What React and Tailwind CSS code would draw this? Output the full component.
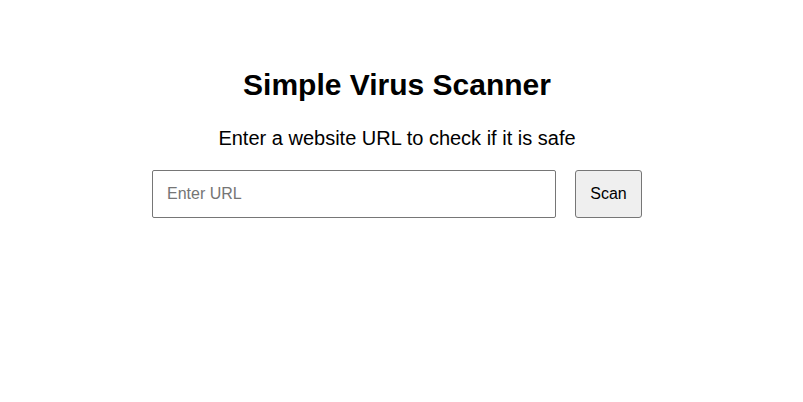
import { useState } from "react";

function App() {
  const [url, setUrl] = useState("");

  return (
    <div className="min-h-screen bg-white pt-[70px] pr-[9px] text-black font-['Liberation_Sans',Arial,sans-serif]">
      <h1 className="text-center text-[30px] leading-[30px] font-bold">
        Simple Virus Scanner
      </h1>
      <p className="mt-[28px] text-center text-[20px] leading-[20px]">
        Enter a website URL to check if it is safe
      </p>
      <div className="mt-[22px] flex justify-center gap-[19px]">
        <input
          type="text"
          value={url}
          onChange={(e) => setUrl(e.target.value)}
          placeholder="Enter URL"
          className="h-[48px] w-[404px] rounded-[2px] border border-[#767676] px-[14px] text-[16px] outline-none placeholder:text-[#757575]"
        />
        <button className="h-[48px] w-[67px] rounded-[3px] border border-[#767676] bg-[#efefef] text-[16px]">
          Scan
        </button>
      </div>
    </div>
  );
}

export default App;
